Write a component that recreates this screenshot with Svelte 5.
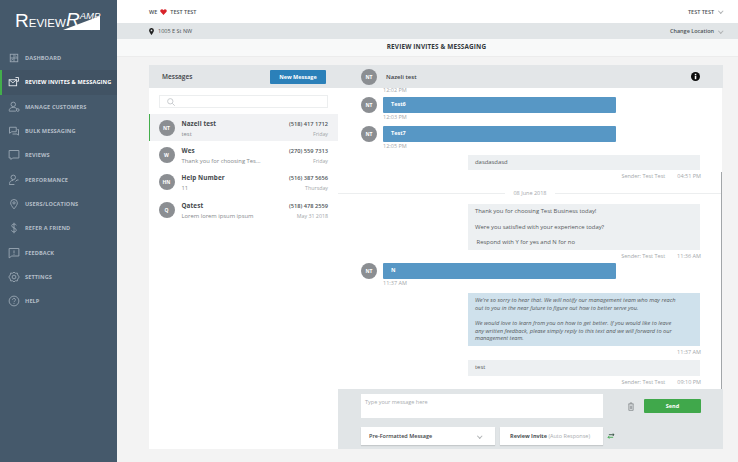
<script>
  const nav = [
    { label: "Dashboard", icon: "dash" },
    { label: "Review Invites & Messaging", icon: "invite", active: true },
    { label: "Manage Customers", icon: "users" },
    { label: "Bulk Messaging", icon: "bulk" },
    { label: "Reviews", icon: "review" },
    { label: "Performance", icon: "perf" },
    { label: "Users/Locations", icon: "pin" },
    { label: "Refer a Friend", icon: "dollar" },
    { label: "Feedback", icon: "feedback" },
    { label: "Settings", icon: "gear" },
    { label: "Help", icon: "help" },
  ];

  const threads = [
    { initials: "NT", name: "Nazeli test", phone: "(518) 417 1712", preview: "test", when: "Friday", active: true },
    { initials: "W", name: "Wes", phone: "(270) 559 7313", preview: "Thank you for choosing Tes...", when: "Friday" },
    { initials: "HN", name: "Help Number", phone: "(516) 387 5656", preview: "11", when: "Thursday" },
    { initials: "Q", name: "Qatest", phone: "(518) 478 2559", preview: "Lorem lorem ipsum ipsum", when: "May 31 2018" },
  ];
</script>

<div class="page">
  <aside class="side">
    <div class="logo">
      <svg width="88" height="34" viewBox="0 0 88 34">
        <path d="M87 16 L87 30 L50 30 Z" fill="#fff" />
      </svg>
      <span class="logo-review"><b>R</b>EVIEW</span>
      <span class="logo-ramp"><b>R</b><i>AMP</i></span>
    </div>
    <nav>
      {#each nav as item}
        <div class="nav-item" class:active={item.active}>
          <svg class="nav-icon" width="12" height="12" viewBox="0 0 16 16" fill="none" stroke="currentColor" stroke-width="1.2">
            {#if item.icon === "dash"}
              <rect x="3" y="3" width="10" height="10" /><path d="M8 3v10M3 8h10M4.500 11l2-1.500M9.500 5l2 1.500" />
            {:else if item.icon === "invite"}
              <rect x="1.500" y="5" width="10" height="8" /><path d="M1.500 5l5 4 5-4M10 2h4v5h-2" />
            {:else if item.icon === "users"}
              <circle cx="7" cy="4.500" r="3" /><path d="M1.500 13c0-3 2.500-4.500 5.500-4.500S12 10 12 11M1.500 13.500h9" /><circle cx="13" cy="12" r="1.800" />
            {:else if item.icon === "bulk"}
              <path d="M2 3h9v6H5l-3 2zM12.500 6H14v7.500l-2-1.500H6" />
            {:else if item.icon === "review"}
              <path d="M1.500 2h13v10H6l-2 2v-2H1.500z" />
            {:else if item.icon === "perf"}
              <circle cx="7" cy="4.500" r="3" /><path d="M2 13c0-3 2-4.500 5-4.500M1.500 14h7M10 10l2-2 2 0" />
            {:else if item.icon === "pin"}
              <path d="M8 14.500c-3-3.500-4.500-6-4.500-8a4.500 4.500 0 0 1 9 0c0 2-1.500 4.500-4.500 8z" /><circle cx="8" cy="6.500" r="1.500" />
            {:else if item.icon === "dollar"}
              <path d="M11 4.500C10.500 3 9.500 2.800 8 2.800 6 2.800 5 3.800 5 5c0 3.500 6 2.200 6 5.800 0 1.400-1.200 2.400-3 2.400s-3-.8-3.300-2.200M8 1v14" />
            {:else if item.icon === "feedback"}
              <path d="M1.500 2h13v10H5l-3.500 2.500zM8 4.500v4M8 9.500v1" />
            {:else if item.icon === "gear"}
              <circle cx="8" cy="8" r="2.500" /><path d="M8 1.500l2 1.500 2.500-.2.500 2.500L15 8l-2 2.700-.5 2.500-2.500-.2-2 1.500-2-1.500-2.500.2-.5-2.500L1 8l2-2.700.5-2.500 2.500.2z" />
            {:else}
              <circle cx="8" cy="8" r="6.500" /><path d="M6 6.500C6 5 7 4.500 8 4.500s2 .7 2 1.800C10 8 8 8 8 9.500M8 10.800v1.200" />
            {/if}
          </svg>
          <span>{item.label}</span>
        </div>
      {/each}
    </nav>
  </aside>

  <main class="main">
    <header class="top">
      <div class="we">
        WE
        <svg width="7" height="6" viewBox="0 0 10 9"><path d="M5 9 .8 4.600C-.6 3 .3.300 2.600.300 3.700.300 4.500.9 5 1.700 5.500.9 6.300.300 7.400.300 9.700.300 10.600 3 9.200 4.600z" fill="#d8232a" /></svg>
        TEST TEST
      </div>
      <div class="user">TEST TEST <span class="chev"></span></div>
    </header>
    <div class="loc">
      <div class="addr">
        <svg width="5" height="7" viewBox="0 0 7 10"><path fill-rule="evenodd" d="M3.500 0A3.400 3.400 0 0 0 0 3.400C0 5.500 3.500 10 3.500 10S7 5.500 7 3.400A3.400 3.400 0 0 0 3.500 0zm0 2.200a1.200 1.200 0 1 1 0 2.400 1.200 1.200 0 0 1 0-2.400z" fill="#222" /></svg>
        1005 E St NW
      </div>
      <div class="change">Change Location <span class="chev"></span></div>
    </div>
    <div class="title">REVIEW INVITES &amp; MESSAGING</div>

    <div class="card">
      <section class="list">
        <div class="list-head">
          <span>Messages</span>
          <button class="new">New Message</button>
        </div>
        <div class="search-wrap">
          <div class="search">
            <svg width="8" height="8" viewBox="0 0 9 9" fill="none" stroke="#c3c7ca" stroke-width="1"><circle cx="3.700" cy="3.700" r="3" /><path d="M6 6l2.700 2.700" /></svg>
          </div>
        </div>
        {#each threads as t}
          <div class="thread" class:active={t.active}>
            <span class="avatar">{t.initials}</span>
            <div class="thread-body">
              <div class="line"><span class="name">{t.name}</span><span class="phone">{t.phone}</span></div>
              <div class="line sub"><span>{t.preview}</span><span class="when">{t.when}</span></div>
            </div>
          </div>
        {/each}
      </section>

      <section class="chat">
        <div class="chat-head">
          <span class="avatar">NT</span>
          <span class="chat-name">Nazeli test</span>
          <svg class="info" width="9" height="9" viewBox="0 0 10 10"><circle cx="5" cy="5" r="5" fill="#0c0c0c" /><rect x="4.200" y="4.200" width="1.700" height="3.800" fill="#fff" /><rect x="4.200" y="2" width="1.700" height="1.500" fill="#fff" /></svg>
        </div>
        <div class="log">
          <span class="thumb"></span>
          <div class="time clip">12:02 PM</div>
          <div class="in"><span class="avatar">NT</span><div class="bubble">Test6</div></div>
          <div class="time">12:03 PM</div>
          <div class="in"><span class="avatar">NT</span><div class="bubble">Test7</div></div>
          <div class="time">12:05 PM</div>

          <div class="out short">dasdasdasd</div>
          <div class="meta"><span>Sender: Test Test</span><span>04:51 PM</span></div>

          <div class="day"><span>08 June 2018</span></div>

          <div class="out">
            <p>Thank you for choosing Test Business today!</p>
            <p>Were you satisfied with your experience today?</p>
            <p>&nbsp;Respond with Y for yes and N for no</p>
          </div>
          <div class="meta"><span>Sender: Test Test</span><span>11:36 AM</span></div>

          <div class="in n"><span class="avatar">NT</span><div class="bubble">N</div></div>
          <div class="time">11:37 AM</div>

          <div class="out auto">
            <p>We're so sorry to hear that. We will notify our management team who may reach out to you in the near future to figure out how to better serve you.</p>
            <p>We would love to learn from you on how to get better. If you would like to leave any written feedback, please simply reply to this text and we will forward to our management team.</p>
          </div>
          <div class="meta"><span>11:37 AM</span></div>

          <div class="out short last">test</div>
          <div class="meta"><span>Sender: Test Test</span><span>09:10 PM</span></div>
        </div>

        <div class="compose">
          <div class="row">
            <div class="input">Type your message here</div>
            <svg class="trash" width="6" height="9" viewBox="0 0 7 10" fill="none" stroke="#8b9093" stroke-width="1"><path d="M.500 2h6M2.500 2V.800h2V2M1 2v7.500h5V2M2.700 4v4M4.300 4v4" /></svg>
            <button class="send">Send</button>
          </div>
          <div class="row">
            <div class="select">Pre-Formatted Message <span class="chev"></span></div>
            <div class="invite"><b>Review Invite</b> (Auto Response)</div>
            <svg width="8" height="6" viewBox="0 0 9 7" fill="none" stroke-width="1"><path d="M1 5h6M2.500 3.500 1 5l1.500 1.500" stroke="#3ba648" /><path d="M8 2H2M6.500.500 8 2 6.500 3.500" stroke="#2d4a3a" /></svg>
          </div>
        </div>
      </section>
    </div>
  </main>
</div>

<style>
  :global(body) {
    margin: 0;
    font-family: "Open Sans", "Liberation Sans", sans-serif;
  }
  .page {
    display: flex;
    width: 738px;
    height: 462px;
    overflow: hidden;
    background: #f3f3f3;
    color: #3d4246;
  }
  .side {
    width: 117px;
    flex: none;
    background: #45596b;
    color: #b4bec8;
  }
  .logo {
    position: relative;
    height: 46px;
    color: #fff;
    font-family: "Liberation Sans", sans-serif;
  }
  .logo svg {
    position: absolute;
    left: 13px;
    top: 0;
  }
  .logo-review {
    position: absolute;
    left: 15px;
    top: 12px;
    font-size: 11.500px;
    line-height: 18px;
  }
  .logo-review b {
    font-weight: 400;
    font-size: 19px;
  }
  .logo-ramp {
    position: absolute;
    left: 66px;
    top: 7px;
    line-height: 18px;
    font-style: italic;
  }
  .logo-ramp b {
    font-weight: 400;
    font-size: 19px;
  }
  .logo-ramp i {
    font-size: 9.500px;
    vertical-align: 7px;
  }
  .nav-item {
    display: flex;
    align-items: center;
    gap: 5px;
    height: 24.300px;
    padding-left: 6px;
    border-left: 2px solid transparent;
    font-size: 5.600px;
    font-weight: 700;
    letter-spacing: 0.100px;
    text-transform: uppercase;
    white-space: nowrap;
  }
  .nav-icon {
    flex: none;
    color: #9aa7b3;
  }
  .nav-item.active {
    border-left-color: #43ae4b;
    background: #415364;
    color: #fff;
  }
  .nav-item.active .nav-icon {
    color: #e6eaee;
  }
  .main {
    flex: 1;
    min-width: 0;
  }
  .top {
    height: 23px;
    background: #fff;
    display: flex;
    align-items: center;
    justify-content: space-between;
    padding: 0 16px 0 32px;
    font-size: 5.500px;
    font-weight: 600;
    color: #4a4f53;
  }
  .we {
    display: flex;
    align-items: center;
    gap: 3px;
  }
  .loc {
    height: 16px;
    background: #e1e5e7;
    display: flex;
    align-items: center;
    justify-content: space-between;
    padding: 0 16px 0 32px;
    font-size: 5.500px;
    color: #4c5256;
  }
  .addr {
    display: flex;
    align-items: center;
    gap: 4px;
  }
  .change {
    font-weight: 600;
  }
  .chev {
    display: inline-block;
    width: 2.500px;
    height: 2.500px;
    margin: 0 0 1px 3px;
    border-right: 0.500px solid #b0b3b5;
    border-bottom: 0.500px solid #b0b3b5;
    transform: rotate(45deg);
  }
  .title {
    height: 17px;
    line-height: 16px;
    padding-left: 18px;
    background: #f8f9f9;
    border-bottom: 1px solid #ececec;
    text-align: center;
    font-size: 6.400px;
    font-weight: 700;
    letter-spacing: 0.150px;
    color: #33383c;
  }
  .card {
    display: flex;
    margin: 8px 0 0 32px;
    width: 574px;
    height: 384px;
  }
  .list {
    width: 189px;
    flex: none;
    background: #fff;
  }
  .list-head {
    height: 23px;
    background: #e3e6e8;
    display: flex;
    align-items: center;
    justify-content: space-between;
    padding: 0 12px 0 13px;
    font-size: 6.500px;
    font-weight: 600;
  }
  .new {
    width: 56px;
    height: 14px;
    padding: 0;
    border: none;
    border-radius: 1px;
    background: #2b80b9;
    color: #fff;
    font: 700 5.500px "Open Sans", sans-serif;
  }
  .search-wrap {
    padding: 7px 10px 6px;
  }
  .search {
    height: 13px;
    border: 1px solid #eceeef;
    box-sizing: border-box;
    padding-left: 7px;
    display: flex;
    align-items: center;
  }
  .thread {
    display: flex;
    align-items: center;
    gap: 7px;
    height: 27.400px;
    padding: 0 10px 0 8.500px;
    border-left: 1.500px solid transparent;
    box-sizing: border-box;
  }
  .thread.active {
    background: #f1f2f4;
    border-left-color: #43ae4b;
  }
  .avatar {
    width: 16px;
    height: 16px;
    flex: none;
    border-radius: 50%;
    background: #8b8e92;
    color: #fff;
    font-size: 5px;
    font-weight: 700;
    display: flex;
    align-items: center;
    justify-content: center;
  }
  .thread-body {
    flex: 1;
    min-width: 0;
    padding-top: 2px;
  }
  .line {
    display: flex;
    justify-content: space-between;
    align-items: baseline;
  }
  .name {
    font-size: 6.300px;
    font-weight: 700;
    line-height: 10px;
    letter-spacing: 0.100px;
    color: #44484c;
  }
  .phone {
    font-size: 5.700px;
    font-weight: 600;
    color: #4e5357;
  }
  .sub {
    font-size: 5.850px;
    line-height: 10px;
    color: #85898c;
  }
  .when {
    font-size: 5.300px;
    color: #a2a6a9;
  }
  .chat {
    flex: 1;
    min-width: 0;
    display: flex;
    flex-direction: column;
  }
  .chat-head {
    height: 23px;
    flex: none;
    background: #e3e6e8;
    display: flex;
    align-items: center;
    padding-left: 23px;
    gap: 9px;
    font-size: 6px;
    font-weight: 600;
  }
  .chat-name {
    flex: 1;
  }
  .info {
    margin-right: 23px;
  }
  .log {
    position: relative;
    height: 301px;
    flex: none;
    overflow: hidden;
    margin-right: 1px;
    padding-right: 21px;
    background: #fff;
    font-size: 5.900px;
    color: #55595c;
  }
  .thumb {
    position: absolute;
    top: 84px;
    bottom: 0;
    right: 0;
    width: 1.500px;
    background: #a2a6a9;
  }
  .time {
    height: 13px;
    line-height: 9px;
    padding-left: 45px;
    color: #a4a8ab;
    font-size: 5.500px;
  }
  .time.clip {
    height: 9px;
    line-height: 4px;
  }
  .in {
    display: flex;
    align-items: center;
    gap: 6px;
    padding-left: 23px;
  }
  .in.n {
    margin-top: 1px;
  }
  .bubble {
    width: 233px;
    height: 16px;
    padding-left: 8px;
    box-sizing: border-box;
    background: #5797c5;
    color: #fff;
    border-radius: 1px;
    font-size: 5.500px;
    font-weight: 700;
    line-height: 15px;
  }
  .out {
    width: 232px;
    box-sizing: border-box;
    margin-left: 130px;
    padding: 4px 7px 3px;
    background: #edf0f2;
    line-height: 7.800px;
  }
  .out p {
    margin: 0 0 7.800px;
  }
  .out p:last-child {
    margin-bottom: 0;
  }
  .out.short {
    height: 15px;
  }
  .out.short.last {
    height: 16px;
    margin-top: 2px;
  }
  .out.auto {
    margin-top: 1px;
    padding: 4px 20px 3px 7px;
    background: #cfe1ec;
    font-size: 5.650px;
    font-style: italic;
    line-height: 7.650px;
  }
  .out.auto p {
    margin-bottom: 7.650px;
  }
  .out.auto p:last-child {
    margin-bottom: 0;
  }
  .meta {
    display: flex;
    justify-content: flex-end;
    gap: 12px;
    height: 12px;
    line-height: 12px;
    color: #a4a8ab;
    font-size: 5.500px;
  }
  .day {
    height: 10px;
    margin: 6px -21px 6px 0;
    text-align: center;
    color: #a4a8ab;
    font-size: 5.500px;
    line-height: 10px;
    background: linear-gradient(#eceeef, #eceeef) 0 50% / 100% 1px no-repeat;
  }
  .day span {
    background: #fff;
    padding: 0 8px;
  }
  .compose {
    flex: none;
    height: 60px;
    background: #e1e5e7;
    padding: 5px 22px 0 23px;
    box-sizing: border-box;
  }
  .row {
    display: flex;
    align-items: center;
  }
  .input {
    width: 242px;
    height: 24px;
    flex: none;
    box-sizing: border-box;
    background: #fff;
    padding: 4px;
    font-size: 5.500px;
    color: #a8acaf;
  }
  .trash {
    margin-left: 25px;
  }
  .send {
    width: 57px;
    height: 14px;
    margin-left: 10px;
    padding: 0;
    border: none;
    background: #40a84b;
    border-radius: 1px;
    color: #fff;
    font: 700 5.500px "Open Sans", sans-serif;
  }
  .compose .row + .row {
    margin-top: 9px;
  }
  .select {
    width: 134px;
    height: 18px;
    flex: none;
    box-sizing: border-box;
    background: #fff;
    padding: 0 14px 0 8px;
    display: flex;
    align-items: center;
    justify-content: space-between;
    font-size: 5.500px;
    font-weight: 600;
    box-shadow: 0 1px 1px rgba(0, 0, 0, 0.12);
  }
  .invite {
    width: 103px;
    height: 18px;
    flex: none;
    margin: 0 4px 0 5px;
    box-sizing: border-box;
    background: #fff;
    padding-left: 10px;
    line-height: 18px;
    font-size: 5.500px;
    color: #a8acaf;
    white-space: nowrap;
    box-shadow: 0 1px 1px rgba(0, 0, 0, 0.12);
  }
  .invite b {
    color: #4a4f53;
    font-weight: 700;
  }
</style>
